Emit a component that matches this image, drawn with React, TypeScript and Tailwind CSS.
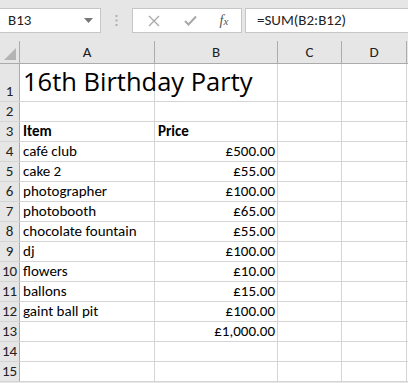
import React from "react";

const rows: { n: number; a?: string; b?: string; bold?: boolean; h?: number }[] = [
  { n: 1, h: 38 },
  { n: 2 },
  { n: 3, a: "Item", b: "Price", bold: true },
  { n: 4, a: "café club", b: "£500.00" },
  { n: 5, a: "cake 2", b: "£55.00" },
  { n: 6, a: "photographer", b: "£100.00" },
  { n: 7, a: "photobooth", b: "£65.00" },
  { n: 8, a: "chocolate fountain", b: "£55.00" },
  { n: 9, a: "dj", b: "£100.00" },
  { n: 10, a: "flowers", b: "£10.00" },
  { n: 11, a: "ballons", b: "£15.00" },
  { n: 12, a: "gaint ball pit", b: "£100.00" },
  { n: 13, b: "£1,000.00" },
  { n: 14 },
  { n: 15 },
];

const font = { fontFamily: "Carlito, Lato, 'Liberation Sans', sans-serif" };

export default function App() {
  return (
    <div
      className="w-[408px] h-[383px] overflow-hidden bg-[#e6e6e6] text-[#000]"
      style={font}
    >
      {/* toolbar */}
      <div className="h-[41px] flex items-start pt-[8px]">
        <div className="w-[101px] h-[25px] bg-white border-r border-b border-t border-[#c6c6c6] flex items-center justify-between pl-[8px] pr-[7px]">
          <span className="text-[15px] leading-none text-[#222]">B13</span>
          <svg width="9" height="5" viewBox="0 0 9 5">
            <path d="M0 0 L9 0 L4.5 5 Z" fill="#777" />
          </svg>
        </div>
        <div className="w-[31px] h-[25px] flex items-center justify-center">
          <svg width="3" height="11" viewBox="0 0 3 11">
            <rect x="0.5" y="0" width="2" height="2" fill="#b0b0b0" />
            <rect x="0.5" y="4.5" width="2" height="2" fill="#b0b0b0" />
            <rect x="0.5" y="9" width="2" height="2" fill="#b0b0b0" />
          </svg>
        </div>
        <div className="w-[110px] h-[25px] bg-white border border-[#c6c6c6] flex items-center">
          <div className="w-[37px] flex justify-center ml-[2px]">
            <svg width="12" height="12" viewBox="0 0 12 12">
              <path d="M1 1 L11 11 M11 1 L1 11" stroke="#a8a8a8" strokeWidth="1.3" />
            </svg>
          </div>
          <div className="w-[37px] flex justify-center">
            <svg width="13" height="11" viewBox="0 0 13 11">
              <path d="M1 6 L4.5 9.5 L12 1.5" stroke="#a8a8a8" strokeWidth="2" fill="none" />
            </svg>
          </div>
          <div className="w-[30px] flex justify-center">
            <span
              className="italic text-[14px] leading-none text-[#555]"
              style={{ fontFamily: "'Liberation Serif', serif" }}
            >
              f<span className="text-[11px]">x</span>
            </span>
          </div>
        </div>
        <div className="ml-[3px] flex-1 h-[25px] bg-white border-t border-b border-l border-[#c6c6c6] flex items-center pl-[11px]">
          <span className="text-[15px] leading-none text-[#222]">=SUM(B2:B12)</span>
        </div>
      </div>

      {/* column headers */}
      <div className="flex h-[23px] border-b border-[#ababab]">
        <div className="w-[20px] relative border-r border-[#ababab] shrink-0">
          <svg className="absolute right-[3px] bottom-[3px]" width="12" height="12" viewBox="0 0 12 12">
            <path d="M12 0 L12 12 L0 12 Z" fill="#b4b4b4" />
          </svg>
        </div>
        {[
          ["A", "w-[135px]"],
          ["B", "w-[123px]"],
          ["C", "w-[64px]"],
          ["D", "w-[65px]"],
        ].map(([l, w]) => (
          <div
            key={l}
            className={`${w} shrink-0 border-r border-[#ababab] flex items-center justify-center text-[15px] text-[#222]`}
          >
            {l}
          </div>
        ))}
      </div>

      {/* rows */}
      {rows.map((r) => (
        <div
          key={r.n}
          className="flex border-b border-[#d4d4d4] bg-white"
          style={{ height: r.h ?? 20 }}
        >
          <div className="w-[20px] shrink-0 bg-[#e6e6e6] border-r border-[#ababab] border-b-0 flex items-end justify-center pb-[1px] text-[15px] leading-[18px] text-[#222]">
            {r.n}
          </div>
          <div className="w-[135px] shrink-0 border-r border-[#d4d4d4] flex items-end pl-[3px] pb-[1px] relative">
            {r.n === 1 ? (
              <span
                className="absolute left-[3px] bottom-[7px] text-[25.5px] leading-none whitespace-nowrap"
                style={{ fontFamily: "'Open Sans', sans-serif" }}
              >
                16th Birthday Party
              </span>
            ) : (
              <span
                className={`text-[15px] leading-[18px] whitespace-nowrap ${r.bold ? "font-bold" : ""}`}
              >
                {r.a}
              </span>
            )}
          </div>
          <div
            className={`w-[123px] shrink-0 border-r border-[#d4d4d4] flex items-end pb-[1px] ${
              r.bold ? "justify-start pl-[3px]" : "justify-end pr-[2px]"
            }`}
          >
            {r.n !== 1 && (
              <span
                className={`text-[15px] leading-[18px] whitespace-nowrap ${r.bold ? "font-bold" : ""}`}
              >
                {r.b}
              </span>
            )}
          </div>
          <div className="w-[64px] shrink-0 border-r border-[#d4d4d4]" />
          <div className="w-[65px] shrink-0 border-r border-[#d4d4d4]" />
          <div className="flex-1 bg-white" />
        </div>
      ))}
    </div>
  );
}
